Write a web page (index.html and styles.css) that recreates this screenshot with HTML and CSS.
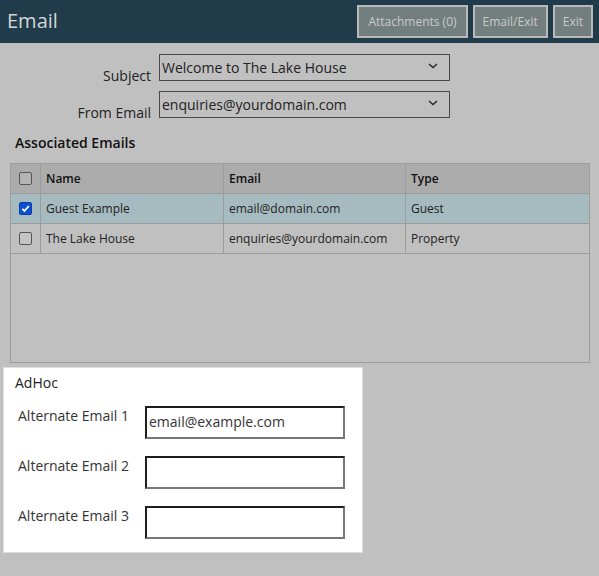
FILE: index.html
```html
<!DOCTYPE html>
<html>
<head>
<meta charset="utf-8">
<link rel="stylesheet" href="styles.css">
</head>
<body>
<header class="topbar">
  <div class="title">Email</div>
  <div class="actions">
    <button class="btn btn-wide">Attachments (0)</button>
    <button class="btn">Email/Exit</button>
    <button class="btn">Exit</button>
  </div>
</header>
<main class="content">
  <div class="form">
    <label class="flabel">Subject</label>
    <div class="select"><span>Welcome to The Lake House</span><svg class="chev" width="10" height="6" viewBox="0 0 10 6"><path d="M1 1 L5 4.6 L9 1" fill="none" stroke="#222" stroke-width="1.3"/></svg></div>
    <label class="flabel">From Email</label>
    <div class="select"><span>enquiries@yourdomain.com</span><svg class="chev" width="10" height="6" viewBox="0 0 10 6"><path d="M1 1 L5 4.6 L9 1" fill="none" stroke="#222" stroke-width="1.3"/></svg></div>
  </div>
  <h2 class="section">Associated Emails</h2>
  <div class="grid">
    <div class="row head">
      <div class="cell cb"><span class="check"></span></div>
      <div class="cell">Name</div>
      <div class="cell">Email</div>
      <div class="cell last">Type</div>
    </div>
    <div class="row sel">
      <div class="cell cb"><span class="check on"><svg width="11" height="11" viewBox="0 0 11 11"><path d="M2.3 5.8 L4.5 8 L8.8 3" fill="none" stroke="#fff" stroke-width="1.8"/></svg></span></div>
      <div class="cell">Guest Example</div>
      <div class="cell">email@domain.com</div>
      <div class="cell last">Guest</div>
    </div>
    <div class="row">
      <div class="cell cb"><span class="check"></span></div>
      <div class="cell">The Lake House</div>
      <div class="cell">enquiries@yourdomain.com</div>
      <div class="cell last">Property</div>
    </div>
  </div>
  <section class="adhoc">
    <h3 class="adhoc-title">AdHoc</h3>
    <div class="adhoc-rows">
      <label class="alabel">Alternate Email 1</label>
      <div class="input">email@example.com</div>
      <label class="alabel">Alternate Email 2</label>
      <div class="input"></div>
      <label class="alabel">Alternate Email 3</label>
      <div class="input"></div>
    </div>
  </section>
</main>
</body>
</html>
```
FILE: styles.css
```css
* { box-sizing: border-box; }
html, body { margin: 0; padding: 0; }
body {
  background: #c0c0c0;
  font-family: "Open Sans", "Liberation Sans", sans-serif;
  color: #222;
  width: 599px;
  height: 576px;
  overflow: hidden;
}
.topbar {
  height: 43px;
  background: #203c4b;
  display: flex;
  align-items: flex-start;
  justify-content: space-between;
}
.title {
  color: #d3d7d9;
  font-size: 20px;
  line-height: 27px;
  padding: 7px 0 0 7px;
}
.actions {
  display: flex;
  gap: 5px;
  padding: 5px 6px 0 0;
}
.btn {
  height: 33px;
  border: 2px solid #b9b9b9;
  background: #737f7e;
  color: #cacaca;
  font-family: "Open Sans", "Liberation Sans", sans-serif;
  font-size: 12px;
  padding: 0 8px;
  margin: 0;
}
.btn-wide { padding: 0 9px; }
.content { padding: 11px 0 0 0; }
.form {
  display: grid;
  grid-template-columns: 151px 291px;
  column-gap: 8px;
  row-gap: 10px;
  align-items: end;
}
.flabel {
  text-align: right;
  font-size: 14px;
  line-height: 19px;
  color: #222;
  margin-bottom: -4px;
}
.select {
  height: 27px;
  border: 1px solid #4a4a4a;
  display: flex;
  align-items: center;
  justify-content: space-between;
  padding: 0 11px 0 2px;
  font-size: 14px;
  color: #222;
}
.select span { margin-top: -1px; }
.chev { margin-top: -3px; }
.section {
  margin: 15px 0 11px 15px;
  font-size: 14px;
  line-height: 19px;
  font-weight: 600;
  color: #111;
}
.grid {
  margin-left: 10px;
  width: 580px;
  height: 200px;
  border: 1px solid #9c9c9c;
}
.row {
  display: grid;
  grid-template-columns: 30px 183px 182px 1fr;
  height: 30px;
  border-bottom: 1px solid #9c9c9c;
}
.row.head { background: #acacac; font-weight: 600; color: #111; }
.row.sel { background: #a6bbc0; }
.cell {
  border-right: 1px solid #9c9c9c;
  font-size: 12px;
  line-height: 16px;
  padding: 0 5px;
  display: flex;
  align-items: center;
  color: #222;
}
.row.head .cell { color: #111; }
.cell.last { border-right: none; }
.cell.cb { justify-content: center; padding: 0; }
.check {
  width: 13px;
  height: 13px;
  border: 1px solid #555;
  border-radius: 2px;
  background: #c4c4c4;
  display: flex;
  align-items: center;
  justify-content: center;
}
.row.head .check { background: #b4b4b4; }
.check.on { background: #0b4fd4; border-color: #0b3fa8; }
.adhoc {
  margin: 4px 0 0 3px;
  width: 360px;
  height: 186px;
  background: #fff;
  border: 1px solid #dedede;
  padding: 5px 0 0 11px;
}
.adhoc-title {
  margin: 0;
  font-size: 14px;
  line-height: 19px;
  font-weight: 500;
  color: #222;
}
.adhoc-rows {
  margin-top: 14px;
  display: grid;
  grid-template-columns: 127px 200px;
  row-gap: 17px;
  align-items: start;
  padding-left: 3px;
}
.alabel {
  font-size: 14px;
  line-height: 19px;
  color: #333;
}
.input {
  height: 33px;
  border: 2px solid;
  border-color: #1e1e1e #777 #777 #1e1e1e;
  background: #fff;
  font-size: 14px;
  color: #333;
  padding: 4px 0 0 2px;
  line-height: 19px;
}
```
